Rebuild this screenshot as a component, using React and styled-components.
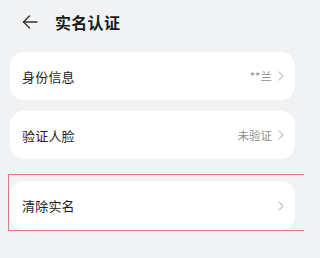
import React from 'react';
import styled, { createGlobalStyle } from 'styled-components';

const GlobalStyle = createGlobalStyle`
  html, body {
    margin: 0;
    padding: 0;
    background: #f1f2f4;
    overflow: hidden;
  }
  body {
    font-family: "Noto Sans CJK SC", "Noto Sans", sans-serif;
  }
`;

const Page = styled.div`
  width: 304px;
  height: 258px;
  box-sizing: border-box;
  padding: 0 9px 0 10px;
  background: #f1f2f4;
  overflow: hidden;
`;

const Header = styled.div`
  height: 44px;
  display: flex;
  align-items: center;
  padding-left: 12px;
  gap: 17px;
  margin-bottom: 8px;
`;

const Title = styled.div`
  font-size: 16px;
  font-weight: 700;
  color: #1b1b1b;
  letter-spacing: 0.3px;
`;

const List = styled.div`
  display: flex;
  flex-direction: column;
  gap: 11px;
`;

const Card = styled.div`
  box-sizing: border-box;
  width: 285px;
  height: ${({ $tall }) => ($tall ? '49px' : '48px')};
  background: #ffffff;
  border-radius: 14px;
  display: flex;
  align-items: center;
  padding: 0 11px 0 12px;
`;

const Label = styled.div`
  flex: 1;
  font-size: 13px;
  color: #1e1e1e;
  letter-spacing: 0.2px;
`;

const Value = styled.div`
  font-size: 11.5px;
  color: #8c8c8c;
  margin-right: 6px;
`;

const Highlight = styled.div`
  width: 320px;
  margin: 4px 0 0 -2px;
  padding: 6px 0 0 1px;
  border: 1px solid #e2777c;
`;

const Back = () => (
  <svg width="16" height="14" viewBox="0 0 16 14" fill="none" stroke="#333" strokeWidth="1.4" strokeLinecap="round" strokeLinejoin="round">
    <path d="M15 7H1.5" />
    <path d="M7.5 1L1.5 7l6 6" />
  </svg>
);

const Chevron = () => (
  <svg width="6" height="10" viewBox="0 0 6 10" fill="none" stroke="#c4c4c4" strokeWidth="1.1" strokeLinecap="round" strokeLinejoin="round">
    <path d="M1 1l4 4-4 4" />
  </svg>
);

const Row = ({ label, value, tall }) => (
  <Card $tall={tall}>
    <Label>{label}</Label>
    {value && <Value>{value}</Value>}
    <Chevron />
  </Card>
);

export default function App() {
  return (
    <Page>
      <GlobalStyle />
      <Header>
        <Back />
        <Title>实名认证</Title>
      </Header>
      <List>
        <Row label="身份信息" value="**兰" />
        <Row label="验证人脸" value="未验证" />
        <Highlight>
          <Row label="清除实名" tall />
        </Highlight>
      </List>
    </Page>
  );
}
